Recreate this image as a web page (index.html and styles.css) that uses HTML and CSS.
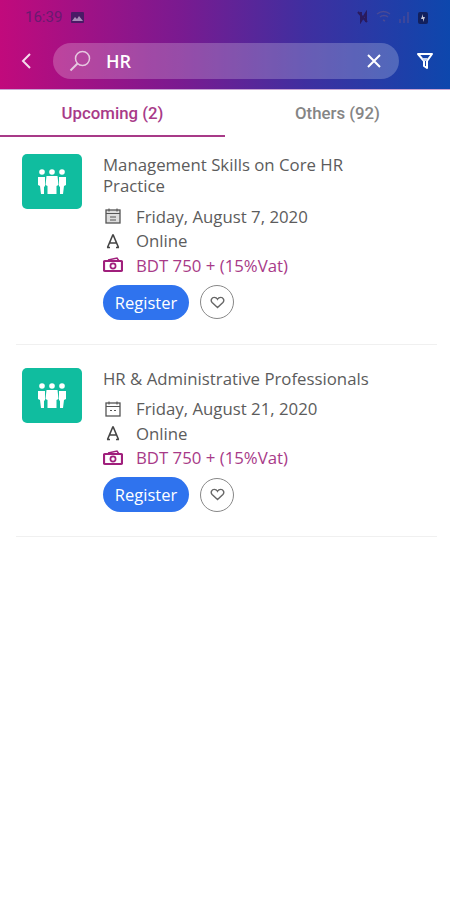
FILE: index.html
```html
<!DOCTYPE html>
<html lang="en">

<head>
    <meta charset="UTF-8">
    <meta name="viewport" content="width=device-width, initial-scale=1.0">
    <title>Search trainings</title>
    <link rel="stylesheet" href="styles.css">
</head>

<body>
    <header class="header">
        <div class="status-bar">
            <div class="status-left">
                <span class="clock">16:39</span>
                <svg class="status-icon" width="13" height="11" viewBox="0 0 13 11"><rect width="13" height="11" rx="1" fill="#4a1a66"/><path d="M1 9l3-4 2 2 2-3 4 5z" fill="#a98ab8"/></svg>
            </div>
            <div class="status-right">
                <svg width="14" height="14" viewBox="0 0 14 14"><path d="M2 2l9 10M5 2v9l5-8v9" stroke="#2a1a5e" stroke-width="2" fill="none"/></svg>
                <svg width="16" height="14" viewBox="0 0 16 14"><path d="M1 4c4-3 9-3 13 0M4 7c2-2 6-2 8 0M7 10l2 1" stroke="#4a4a96" stroke-width="1.4" fill="none"/></svg>
                <svg width="14" height="14" viewBox="0 0 14 14"><path d="M2 9v4M6 6v7M10 2v11" stroke="#4a4a96" stroke-width="1.4"/></svg>
                <svg width="10" height="13" viewBox="0 0 10 13"><rect y="1" width="10" height="12" rx="2" fill="#12205e"/><path d="M5 3L3 8h2v3l2-5H5z" fill="#c8c8d8"/></svg>
            </div>
        </div>
        <div class="search-row">
            <svg class="back" width="12" height="18" viewBox="0 0 12 18"><path d="M10 2L3 9l7 7" stroke="#f4dcec" stroke-width="2" fill="none"/></svg>
            <div class="search-box">
                <svg class="search-icon" width="24" height="24" viewBox="0 0 24 24"><circle cx="14.500" cy="9.500" r="7" stroke="#e6c8e0" stroke-width="1.500" fill="none"/><path d="M9.500 14.500L2.500 21.500" stroke="#e6c8e0" stroke-width="2" fill="none"/></svg>
                <span class="search-text">HR</span>
                <svg class="clear" width="14" height="14" viewBox="0 0 14 14"><path d="M1 1l12 12M13 1L1 13" stroke="#fff" stroke-width="2"/></svg>
            </div>
            <svg class="filter" width="18" height="18" viewBox="0 0 18 18"><path d="M2 2h14l-5 7v7l-3-2V9z" stroke="#fff" stroke-width="2" fill="none" stroke-linejoin="round"/><path d="M6 6h6l-2 3H8z" fill="#c8d4f0"/></svg>
        </div>
    </header>

    <nav class="tabs">
        <div class="tab active">Upcoming (2)</div>
        <div class="tab">Others (92)</div>
    </nav>

    <main class="list">
        <article class="card">
            <div class="thumb">
                <svg width="30" height="27" viewBox="0 0 30 27"><g fill="#fff"><circle cx="5" cy="4" r="2.800"/><circle cx="15" cy="4" r="2.800"/><circle cx="25" cy="4" r="2.800"/><path d="M1 9h7v9l-1 1v7H4l-1-8-2-1zM22 9h7v8l-2 1-1 8h-3v-7l-1-1z"/><path d="M9.500 8h11l1 9-2 1v8h-9v-8l-2-1z"/></g></svg>
            </div>
            <div class="info">
                <h3 class="title">Management Skills on Core HR Practice</h3>
                <div class="meta"><svg class="meta-icon" width="18" height="18" viewBox="0 0 18 18"><rect x="2" y="3" width="14" height="13" fill="#ddd" stroke="#555" stroke-width="1.300"/><path d="M2 6.500h14M5 1.500v3M13 1.500v3M6 10h6M6 13h6" stroke="#555" stroke-width="1.100"/></svg>Friday, August 7, 2020</div>
                <div class="meta"><svg class="meta-icon" width="18" height="18" viewBox="0 0 18 18"><path d="M9 2.500L3.500 15.500M9 2.500l5.500 13M6 11h6M3 15.500h3M12 15.500h3" stroke="#444" stroke-width="1.600" fill="none"/></svg>Online</div>
                <div class="meta price"><svg class="meta-icon" width="20" height="18" viewBox="0 0 20 18"><rect x="1" y="5" width="18" height="10" rx="1" fill="none" stroke="#a01f7c" stroke-width="2.200"/><circle cx="10" cy="10" r="2.600" fill="none" stroke="#a01f7c" stroke-width="1.700"/><path d="M5 4l9-2 2 3" stroke="#a01f7c" stroke-width="1.500" fill="none"/></svg>BDT 750 + (15%Vat)</div>
                <div class="actions">
                    <button class="register">Register</button>
                    <button class="like"><svg width="15" height="13" viewBox="0 0 16 14"><path d="M8 12.500L2.200 7C0 4.500 2 1.500 4.500 1.500 6 1.500 7.300 2.300 8 3.500 8.700 2.300 10 1.500 11.500 1.500 14 1.500 16 4.500 13.800 7z" stroke="#666" stroke-width="1.500" fill="none"/></svg></button>
                </div>
            </div>
        </article>

        <article class="card">
            <div class="thumb">
                <svg width="30" height="27" viewBox="0 0 30 27"><g fill="#fff"><circle cx="5" cy="4" r="2.800"/><circle cx="15" cy="4" r="2.800"/><circle cx="25" cy="4" r="2.800"/><path d="M1 9h7v9l-1 1v7H4l-1-8-2-1zM22 9h7v8l-2 1-1 8h-3v-7l-1-1z"/><path d="M9.500 8h11l1 9-2 1v8h-9v-8l-2-1z"/></g></svg>
            </div>
            <div class="info">
                <h3 class="title">HR &amp; Administrative Professionals</h3>
                <div class="meta"><svg class="meta-icon" width="18" height="18" viewBox="0 0 18 18"><rect x="2" y="3" width="14" height="13" fill="none" stroke="#555" stroke-width="1.300"/><path d="M2 6.500h14M5 1.500v3M13 1.500v3M6 10.500h2M10 10.500h2" stroke="#555" stroke-width="1.100"/></svg>Friday, August 21, 2020</div>
                <div class="meta"><svg class="meta-icon" width="18" height="18" viewBox="0 0 18 18"><path d="M9 2.500L3.500 15.500M9 2.500l5.500 13M6 11h6M3 15.500h3M12 15.500h3" stroke="#444" stroke-width="1.600" fill="none"/></svg>Online</div>
                <div class="meta price"><svg class="meta-icon" width="20" height="18" viewBox="0 0 20 18"><rect x="1" y="5" width="18" height="10" rx="1" fill="none" stroke="#a01f7c" stroke-width="2.200"/><circle cx="10" cy="10" r="2.600" fill="none" stroke="#a01f7c" stroke-width="1.700"/><path d="M5 4l9-2 2 3" stroke="#a01f7c" stroke-width="1.500" fill="none"/></svg>BDT 750 + (15%Vat)</div>
                <div class="actions">
                    <button class="register">Register</button>
                    <button class="like"><svg width="15" height="13" viewBox="0 0 16 14"><path d="M8 12.500L2.200 7C0 4.500 2 1.500 4.500 1.500 6 1.500 7.300 2.300 8 3.500 8.700 2.300 10 1.500 11.500 1.500 14 1.500 16 4.500 13.800 7z" stroke="#666" stroke-width="1.500" fill="none"/></svg></button>
                </div>
            </div>
        </article>
    </main>
</body>

</html>
```

FILE: styles.css
```css
body {
    margin: 0;
    background: #ffffff;
    font-family: 'Open Sans', sans-serif;
    color: #5c5c5c;
}

.header {
    height: 89px;
    background: linear-gradient(90deg, #c10a7c 0%, #7a1a90 40%, #3f2fa0 68%, #0d47ad 100%);
    border-bottom: 1px solid #c9a6d4;
}

.status-bar {
    height: 34px;
    padding: 0 22px 0 25px;
    display: flex;
    justify-content: space-between;
    align-items: center;
}

.status-left, .status-right {
    display: flex;
    align-items: center;
    gap: 9px;
}

.status-right {
    gap: 6px;
}

.clock {
    font-family: 'Roboto', sans-serif;
    font-size: 15px;
    color: #6a1a70;
}

.search-row {
    display: flex;
    align-items: center;
    padding: 9px 16px 0 20px;
}

.back {
    flex: none;
}

.search-box {
    flex: 1;
    height: 36px;
    margin: 0 17px 0 21px;
    padding: 0 18px 0 15px;
    display: flex;
    align-items: center;
    border-radius: 18px;
    background: rgba(255, 255, 255, 0.22);
}

.search-text {
    flex: 1;
    margin-left: 14px;
    color: #ffffff;
    font-size: 18px;
    font-weight: 600;
}

.tabs {
    display: flex;
    height: 47px;
}

.tab {
    width: 225px;
    box-sizing: border-box;
    padding-top: 13px;
    text-align: center;
    font-family: 'Roboto', sans-serif;
    font-size: 16.800px;
    font-weight: 500;
    color: #858585;
}

.tab.active {
    color: #a83a88;
    border-bottom: 2px solid #a83a88;
}

.list {
    padding: 17px 13px 0 16px;
}

.card {
    display: flex;
    align-items: flex-start;
    padding-bottom: 24px;
    margin-bottom: 23px;
    border-bottom: 1px solid #f0f0f0;
}

.thumb {
    width: 60px;
    height: 55px;
    margin-left: 6px;
    margin-right: 21px;
    flex: none;
    display: flex;
    align-items: center;
    justify-content: center;
    background: #10bd9f;
    border-radius: 5px;
}

.info {
    flex: 1;
}

.title {
    margin: 0 0 8px 0;
    max-width: 280px;
    font-size: 16.800px;
    font-weight: 400;
    line-height: 21px;
    color: #5c5c5c;
}

.meta {
    height: 24.500px;
    display: flex;
    align-items: center;
    font-size: 16.800px;
    color: #5c5c5c;
}

.meta-icon {
    flex: none;
    width: 20px;
    margin-right: 13px;
}

.price {
    color: #a83a88;
}

.actions {
    display: flex;
    align-items: center;
    gap: 11px;
    margin-top: 7px;
}

.register {
    width: 86px;
    height: 35px;
    border: none;
    border-radius: 18px;
    background: #2f73ee;
    color: #ffffff;
    font-family: 'Open Sans', sans-serif;
    font-size: 16.500px;
    padding: 0;
}

.like {
    width: 34px;
    height: 34px;
    padding: 0;
    display: flex;
    align-items: center;
    justify-content: center;
    background: #ffffff;
    border: 1px solid #888888;
    border-radius: 50%;
}
```
